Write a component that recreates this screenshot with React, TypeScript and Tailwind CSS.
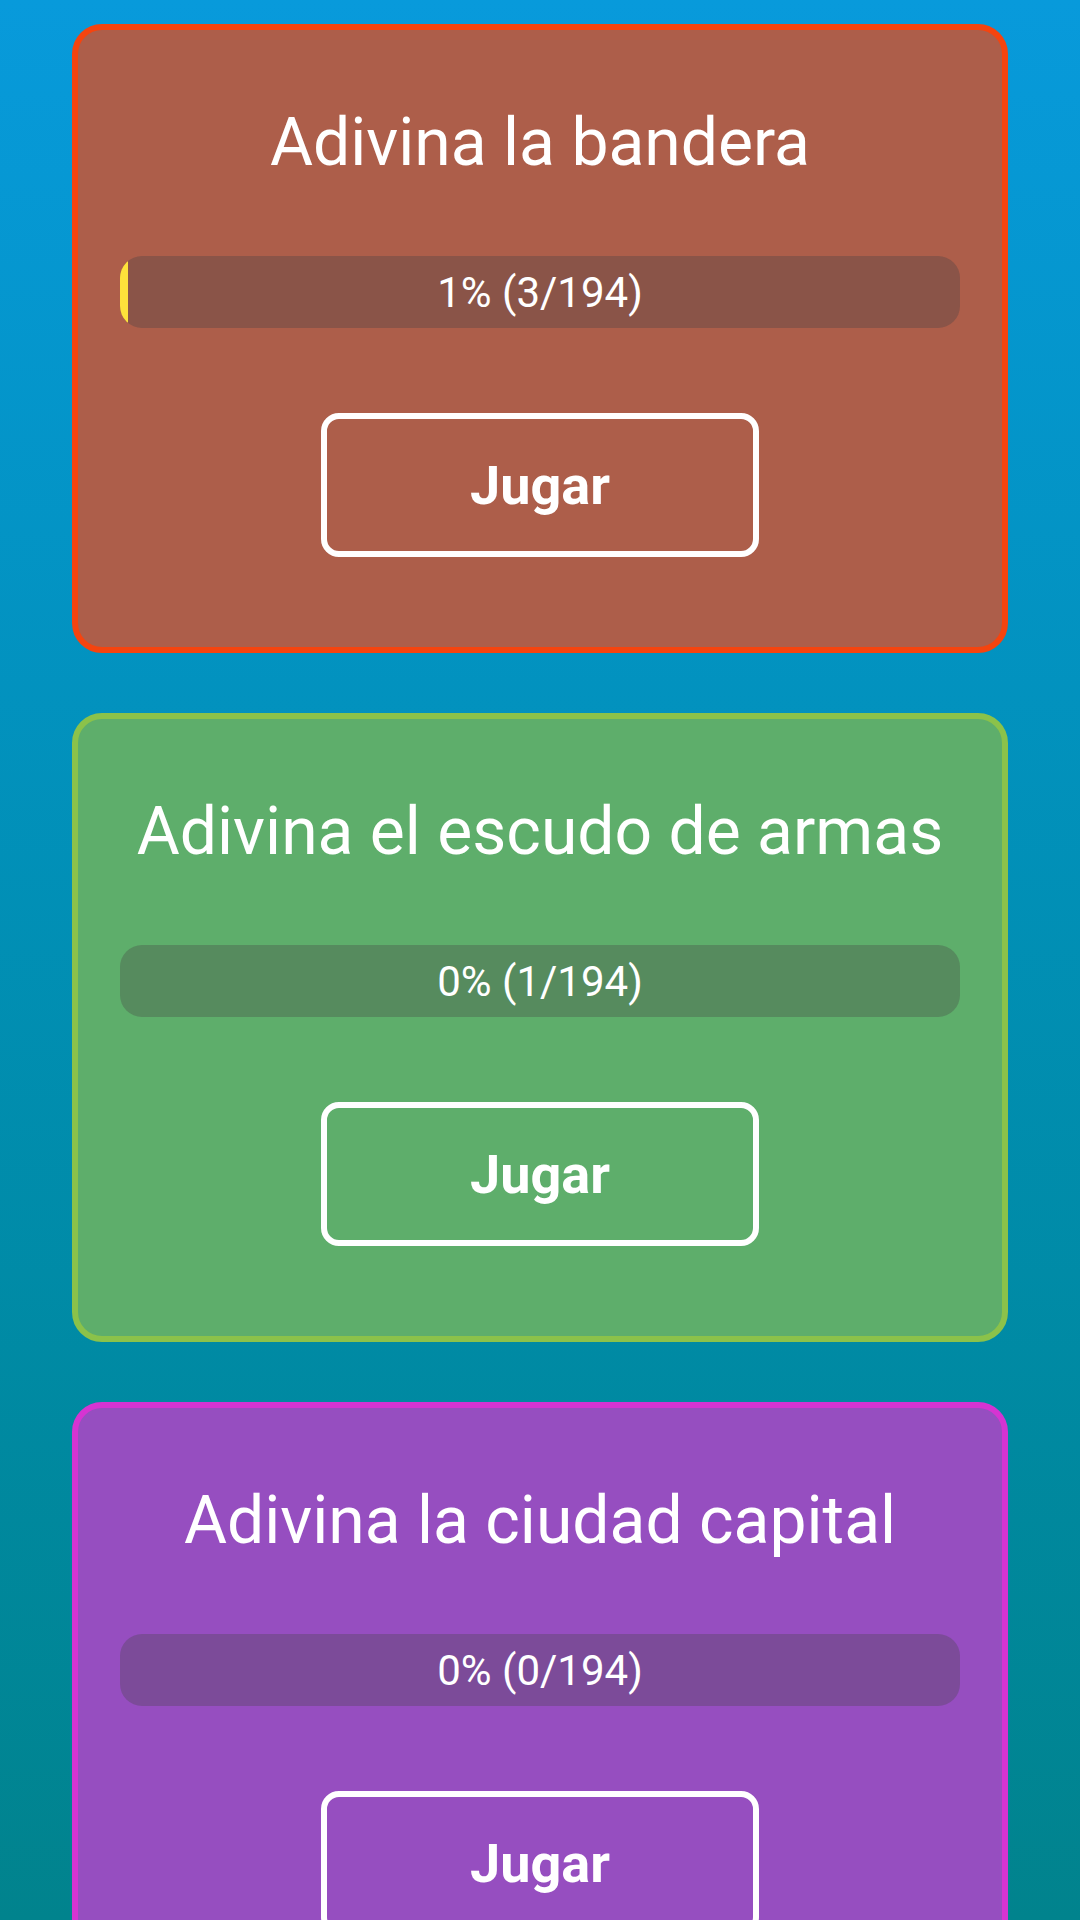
import React from "react";

type Game = {
  title: string;
  done: number;
  total: number;
  bg: string;
  border: string;
  bar: string;
};

const games: Game[] = [
  {
    title: "Adivina la bandera",
    done: 3,
    total: 194,
    bg: "bg-[#AD5E4A]",
    border: "border-[#F5440F]",
    bar: "bg-[#8A5448]",
  },
  {
    title: "Adivina el escudo de armas",
    done: 1,
    total: 194,
    bg: "bg-[#5EAE6B]",
    border: "border-[#8BC24A]",
    bar: "bg-[#568B5E]",
  },
  {
    title: "Adivina la ciudad capital",
    done: 0,
    total: 194,
    bg: "bg-[#964EC0]",
    border: "border-[#D534D2]",
    bar: "bg-[#7C4B99]",
  },
];

function Card({ g }: { g: Game }) {
  const pct = Math.floor((g.done / g.total) * 100);
  return (
    <div
      className={`w-[936px] h-[629px] shrink-0 rounded-[30px] border-[6px] ${g.border} ${g.bg} flex flex-col items-center px-[42px] pt-[73px]`}
    >
      <div className="h-[80px] leading-[80px] text-[66px] text-white whitespace-nowrap">
        {g.title}
      </div>
      <div
        className={`relative mt-[73px] h-[72px] w-full rounded-[22px] overflow-hidden ${g.bar}`}
      >
        <div
          className="absolute left-0 top-0 bottom-0 bg-[#FDE23B]"
          style={{ width: `${pct}%` }}
        />
        <div className="absolute inset-0 flex items-center justify-center text-[42px] text-white">
          {pct}% ({g.done}/{g.total})
        </div>
      </div>
      <button className="mt-[85px] h-[144px] w-[438px] rounded-[18px] border-[6px] border-white flex items-center justify-center text-[54px] font-bold text-white">
        Jugar
      </button>
    </div>
  );
}

export default function App() {
  return (
    <div
      className="h-screen w-full overflow-hidden bg-gradient-to-b from-[#089ADB] to-[#01838D] flex flex-col items-center gap-[60px] pt-[24px]"
      style={{ fontFamily: "Roboto, 'Noto Sans', sans-serif" }}
    >
      {games.map((g) => (
        <Card key={g.title} g={g} />
      ))}
    </div>
  );
}
